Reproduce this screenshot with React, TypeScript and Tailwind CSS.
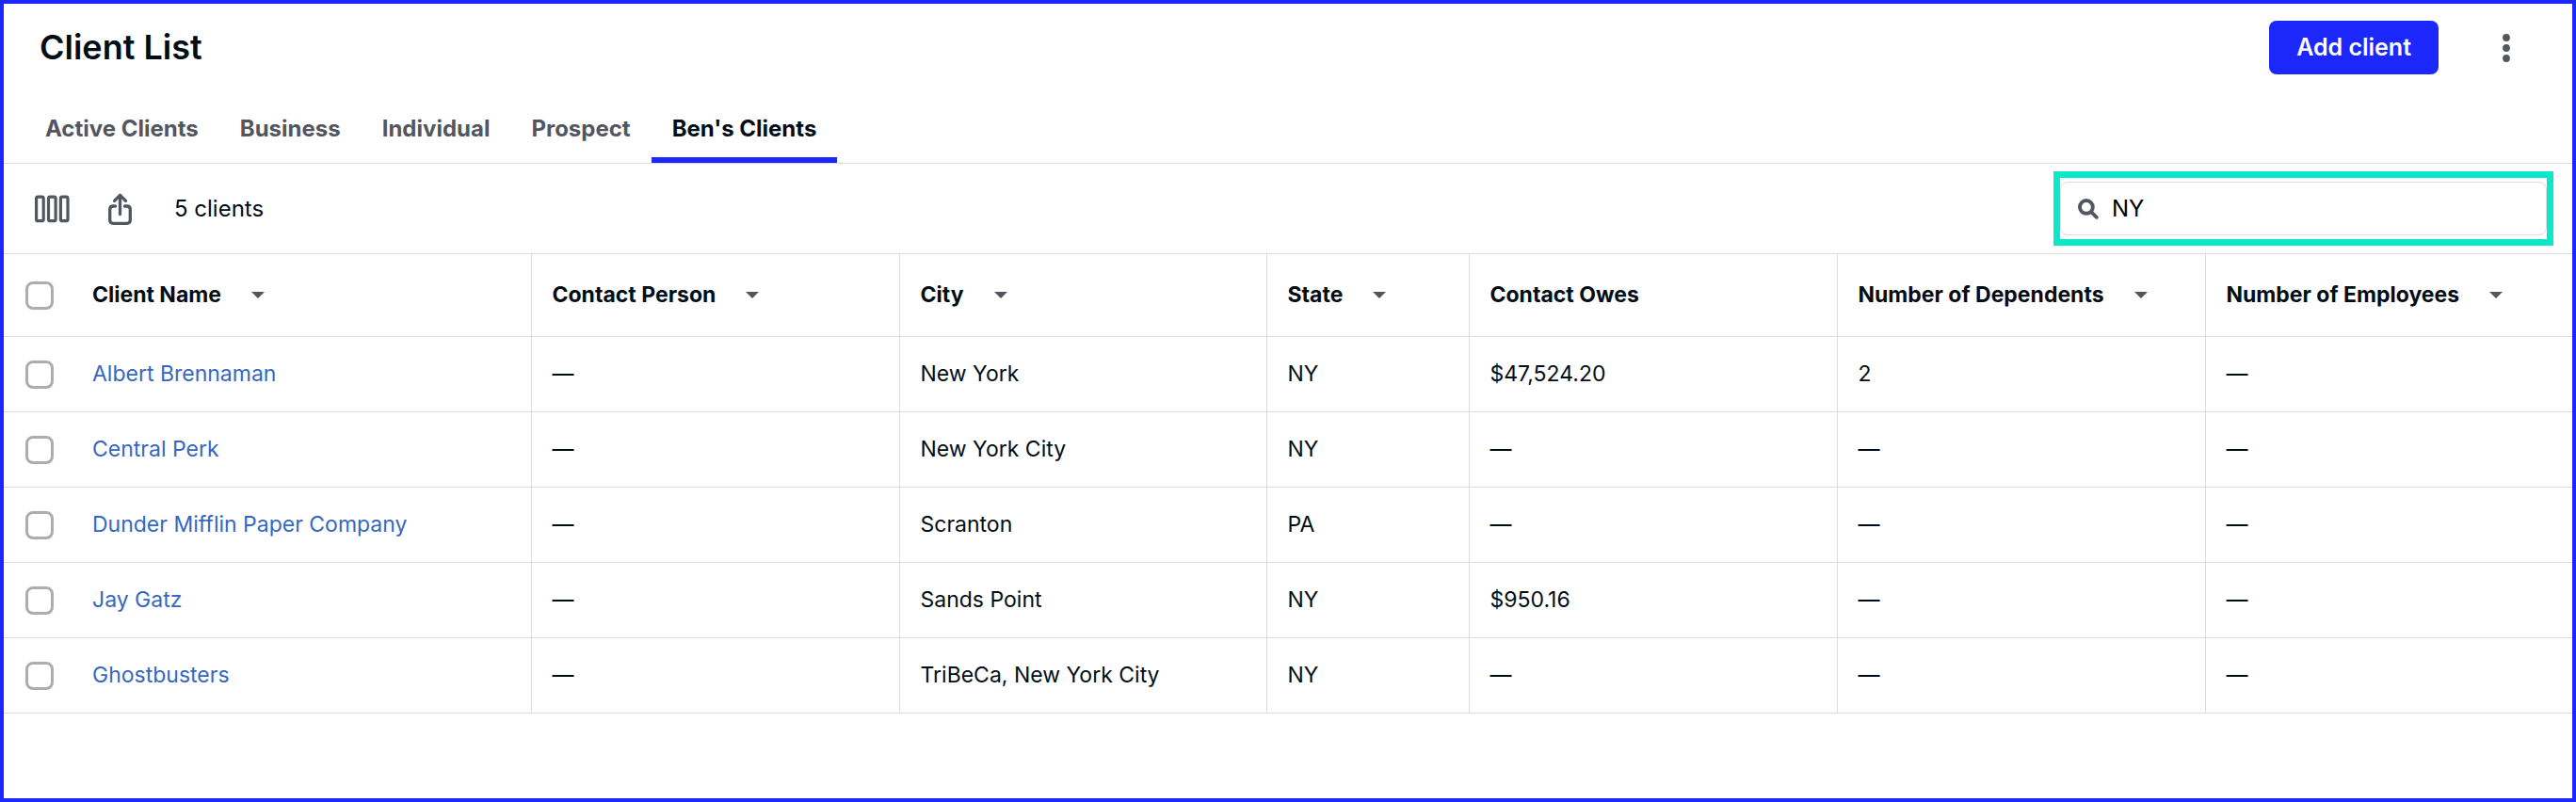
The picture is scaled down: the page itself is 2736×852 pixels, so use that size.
import { useState } from "react";

const tabs = ["Active Clients", "Business", "Individual", "Prospect", "Ben's Clients"];

const columns = [
  { label: "Client Name", sortable: true },
  { label: "Contact Person", sortable: true },
  { label: "City", sortable: true },
  { label: "State", sortable: true },
  { label: "Contact Owes", sortable: false },
  { label: "Number of Dependents", sortable: true },
  { label: "Number of Employees", sortable: true },
];

const clients = [
  { name: "Albert Brennaman", cells: ["—", "New York", "NY", "$47,524.20", "2", "—"] },
  { name: "Central Perk", cells: ["—", "New York City", "NY", "—", "—", "—"] },
  { name: "Dunder Mifflin Paper Company", cells: ["—", "Scranton", "PA", "—", "—", "—"] },
  { name: "Jay Gatz", cells: ["—", "Sands Point", "NY", "$950.16", "—", "—"] },
  { name: "Ghostbusters", cells: ["—", "TriBeCa, New York City", "NY", "—", "—", "—"] },
];

function ColumnsIcon() {
  return (
    <svg width="37" height="30" viewBox="0 0 37 30" fill="none" stroke="currentColor" strokeWidth="3.2">
      <rect x="1.6" y="2.1" width="7.6" height="25.6" rx="1.8" />
      <rect x="14.5" y="2.1" width="7.6" height="25.6" rx="1.8" />
      <rect x="27.4" y="2.1" width="7.6" height="25.6" rx="1.8" />
    </svg>
  );
}

function ShareIcon() {
  return (
    <svg width="25" height="34" viewBox="0 0 25 34" fill="none" stroke="currentColor" strokeWidth="3.3" strokeLinecap="round" strokeLinejoin="round">
      <path d="M12.5 22.6V3" />
      <path d="M6.5 8.3L12.5 2.3l6 6" />
      <path d="M7.5 14H5.2Q1.7 14 1.7 17.5V28.8Q1.7 32.3 5.2 32.3H19.8Q23.3 32.3 23.3 28.8V17.5Q23.3 14 19.8 14H17.5" />
    </svg>
  );
}

function SearchIcon() {
  return (
    <svg width="22" height="22" viewBox="0 0 22 22" fill="none" stroke="currentColor" strokeLinecap="round">
      <circle cx="8.9" cy="8.9" r="6.9" strokeWidth="3.9" />
      <path d="M14.6 14.6L19.8 19.8" strokeWidth="3.8" />
    </svg>
  );
}

function MoreIcon() {
  return (
    <svg width="8" height="30" viewBox="0 0 8 30" fill="currentColor">
      <circle cx="4" cy="4" r="3.9" />
      <circle cx="4" cy="15" r="3.9" />
      <circle cx="4" cy="26" r="3.9" />
    </svg>
  );
}

function Checkbox({ label }: { label: string }) {
  return (
    <input
      type="checkbox"
      aria-label={label}
      className="block size-[30px] appearance-none rounded-lg border-3 border-[#adadad] bg-white checked:bg-[#1c28fb]"
    />
  );
}

export default function App() {
  const [activeTab, setActiveTab] = useState("Ben's Clients");
  const [query, setQuery] = useState("NY");

  return (
    <main className="min-h-screen border-4 border-[#1c28fb] bg-white font-['Inter',sans-serif] text-2xl text-[#030d15]">
      <header className="flex items-center justify-between pt-[18px] pr-[66px] pl-[38px]">
        <h1 className="pb-0.5 text-4xl font-semibold">Client List</h1>
        <div className="flex items-center gap-[68px]">
          <button type="button" className="h-[57px] rounded-lg bg-[#1c28fb] px-[29px] text-[25px] font-semibold text-white">
            Add client
          </button>
          <button type="button" aria-label="More options" className="text-[#53565f]">
            <MoreIcon />
          </button>
        </div>
      </header>

      <nav className="mt-[22px] flex border-b border-[#dcdcdc] pl-[22px]">
        {tabs.map((tab) => (
          <button
            key={tab}
            type="button"
            onClick={() => setActiveTab(tab)}
            className={
              tab === activeTab
                ? "h-[72px] border-b-6 border-[#1c28fb] px-[22px] pt-1.5 font-bold"
                : "h-[72px] border-b-6 border-transparent px-[22px] pt-1.5 font-bold text-[#53565f]"
            }
          >
            {tab}
          </button>
        ))}
      </nav>

      <div className="flex h-[95px] items-center justify-between pr-5 pl-[33px]">
        <div className="flex items-center">
          <button type="button" aria-label="Edit columns" className="text-[#53565f]">
            <ColumnsIcon />
          </button>
          <button type="button" aria-label="Export" className="ml-[41px] text-[#53565f]">
            <ShareIcon />
          </button>
          <span className="ml-[45px]">5 clients</span>
        </div>
        <div className="w-[531px] border-7 border-[#0de8c8] py-1">
          <label className="flex h-[57px] items-center gap-3.5 rounded-lg border border-[#dcdcdc] pl-[18px] text-[#53565f]">
            <SearchIcon />
            <input
              type="text"
              aria-label="Search clients"
              value={query}
              onChange={(e) => setQuery(e.target.value)}
              className="min-w-0 flex-1 text-black outline-none"
            />
          </label>
        </div>
      </div>

      <div className="overflow-x-auto">
        <table className="w-full table-fixed border-collapse text-left text-[23px]">
          <colgroup>
            <col className="w-[72px]" />
            <col className="w-[488px]" />
            <col className="w-[391px]" />
            <col className="w-[390px]" />
            <col className="w-[215px]" />
            <col className="w-[391px]" />
            <col className="w-[391px]" />
            <col className="w-[390px]" />
          </colgroup>
          <thead>
            <tr className="h-[88px] border-y border-[#dcdcdc]">
              <th className="pl-[23px]">
                <Checkbox label="Select all clients" />
              </th>
              {columns.map((column) => (
                <th key={column.label} className="border-r border-[#dcdcdc] pl-[22px] font-bold last:border-r-0">
                  {column.sortable ? (
                    <button type="button" className="flex items-center gap-8">
                      {column.label}
                      <svg width="14" height="7" viewBox="0 0 14 7" className="text-[#53565f]">
                        <path d="M0 0h14L7 7z" fill="currentColor" />
                      </svg>
                    </button>
                  ) : (
                    column.label
                  )}
                </th>
              ))}
            </tr>
          </thead>
          <tbody>
            {clients.map((client) => (
              <tr key={client.name} className="h-20 border-b border-[#dcdcdc]">
                <td className="pl-[23px]">
                  <Checkbox label={`Select ${client.name}`} />
                </td>
                <td className="border-r border-[#dcdcdc] pl-[22px]">
                  <a href="#" className="text-[#3568c1]">
                    {client.name}
                  </a>
                </td>
                {client.cells.map((cell, i) => (
                  <td key={i} className="border-r border-[#dcdcdc] pl-[22px] last:border-r-0">
                    {cell}
                  </td>
                ))}
              </tr>
            ))}
          </tbody>
        </table>
      </div>
    </main>
  );
}
